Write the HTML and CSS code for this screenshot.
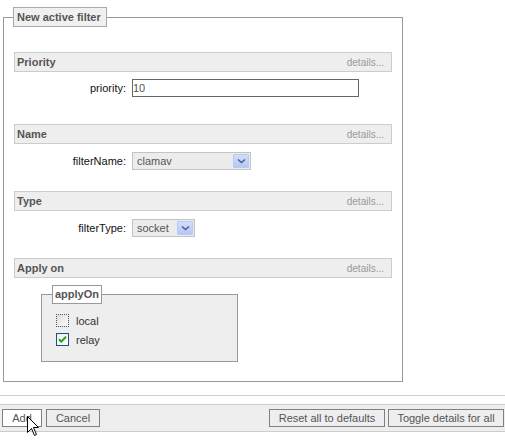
FILE: index.html
```html
<!DOCTYPE html>
<html>
<head>
<meta charset="utf-8">
<title>New active filter</title>
<link rel="stylesheet" href="styles.css">
</head>
<body>
<form class="page">
  <fieldset class="filter-box">
    <legend class="box-title">New active filter</legend>

    <section class="group group-priority">
      <div class="group-head"><span class="group-name">Priority</span><span class="group-details">details...</span></div>
      <div class="field-row row-first">
        <label class="field-label" for="priority">priority:</label>
        <input class="text-input" id="priority" type="text" value="10">
      </div>
    </section>

    <section class="group">
      <div class="group-head"><span class="group-name">Name</span><span class="group-details">details...</span></div>
      <div class="field-row">
        <span class="field-label">filterName:</span>
        <div class="select select-name">
          <span class="select-value">clamav</span>
          <span class="select-arrow"><svg width="9" height="6" viewBox="0 0 9 6"><path d="M1 1.5 L4.5 4.5 L8 1.5" fill="none" stroke="#4d6185" stroke-width="1.6"/></svg></span>
        </div>
      </div>
    </section>

    <section class="group">
      <div class="group-head"><span class="group-name">Type</span><span class="group-details">details...</span></div>
      <div class="field-row">
        <span class="field-label">filterType:</span>
        <div class="select select-type">
          <span class="select-value">socket</span>
          <span class="select-arrow"><svg width="9" height="6" viewBox="0 0 9 6"><path d="M1 1.5 L4.5 4.5 L8 1.5" fill="none" stroke="#4d6185" stroke-width="1.6"/></svg></span>
        </div>
      </div>
    </section>

    <section class="group group-apply">
      <div class="group-head"><span class="group-name">Apply on</span><span class="group-details">details...</span></div>
      <fieldset class="apply-box">
        <legend class="apply-title">applyOn</legend>
        <div class="check-row">
          <span class="check-box check-focus"></span>
          <span class="check-label">local</span>
        </div>
        <div class="check-row">
          <span class="check-box check-on"><svg width="11" height="11" viewBox="0 0 11 11"><path d="M2 5.2 L4.3 7.6 L9 2.8" fill="none" stroke="#21a121" stroke-width="2"/></svg></span>
          <span class="check-label">relay</span>
        </div>
      </fieldset>
    </section>
  </fieldset>

  <div class="divider"></div>

  <div class="action-bar">
    <button type="button" class="btn btn-add">Add</button>
    <button type="button" class="btn btn-cancel">Cancel</button>
    <span class="bar-spacer"></span>
    <button type="button" class="btn btn-reset">Reset all to defaults</button>
    <button type="button" class="btn btn-toggle">Toggle details for all</button>
  </div>

  <svg class="pointer" width="13" height="21" viewBox="0 0 13 21">
    <path d="M0.5 0.5 L0.5 16.5 L4.5 12.5 L7.5 19.5 L9.5 18.5 L6.5 11.5 L11.5 11.5 Z" fill="#fff" stroke="#000" stroke-width="1"/>
  </svg>
</form>
</body>
</html>
```

FILE: styles.css
```css
* {
  box-sizing: border-box;
}

html,
body {
  margin: 0;
  padding: 0;
  background: #fff;
}

body {
  font-family: "Liberation Sans", Arial, sans-serif;
  font-size: 11px;
  color: #222;
}

.page {
  position: relative;
  width: 505px;
  height: 444px;
  overflow: hidden;
}

/* outer frame */
.filter-box {
  width: 400px;
  min-width: 0;
  margin: 7px 0 0 3px;
  padding: 25px 10px 19px;
  border: 1px solid #999;
}

.box-title {
  height: 20px;
  line-height: 18px;
  margin-left: -1px;
  padding: 0 5px 0 3px;
  border: 1px solid #aaa;
  background: #f0f0f0;
  font-weight: bold;
  color: #555;
}

/* section headers */
.group + .group {
  margin-top: 21px;
}

.group-priority + .group {
  margin-top: 27px;
}

.group-head {
  display: flex;
  justify-content: space-between;
  align-items: center;
  height: 20px;
  padding: 0 7px 0 2px;
  border: 1px solid #ccc;
  background: #eee;
}

.group-name {
  font-weight: bold;
  color: #555;
}

.group-details {
  font-size: 10px;
  color: #999;
}

/* label + control rows */
.field-row {
  display: grid;
  grid-template-columns: 112px auto;
  column-gap: 6px;
  align-items: center;
  justify-content: start;
  margin-top: 8px;
}

.field-row.row-first {
  margin-top: 7px;
}

.field-label {
  text-align: right;
  color: #111;
}

.text-input {
  width: 227px;
  height: 18px;
  margin: 0;
  padding: 0;
  border: 1px solid #666;
  font: inherit;
  color: #555;
  background: #fff;
  outline: none;
}

.select {
  display: flex;
  height: 18px;
  padding: 1px;
  border: 1px solid #c3c3c3;
  background: #ececec;
}

.select-name {
  width: 119px;
}

.select-type {
  width: 63px;
}

.select-value {
  flex: 1;
  padding-left: 3px;
  line-height: 14px;
  color: #555;
}

.select-arrow {
  display: flex;
  align-items: center;
  justify-content: center;
  width: 16px;
  border: 1px solid #b7caf6;
  border-radius: 1px;
  background: linear-gradient(#d2ddfb, #b4c7f5);
}

/* applyOn group */
.apply-box {
  width: 197px;
  min-width: 0;
  margin: 7px 0 0 27px;
  padding: 10px 10px 15px;
  border: 1px solid #999;
  background: #eee;
}

.apply-title {
  height: 19px;
  line-height: 17px;
  padding: 0 2px;
  border: 1px solid #999;
  background: #fff;
  font-weight: bold;
  color: #555;
}

.check-row {
  display: flex;
  align-items: center;
  height: 13px;
  margin-left: 4px;
}

.check-row + .check-row {
  margin-top: 6px;
}

.check-box {
  display: flex;
  align-items: center;
  justify-content: center;
  width: 13px;
  height: 13px;
  background: linear-gradient(135deg, #dcdcd6, #fcfcfb);
}

.check-focus {
  border: 1px dotted #2f5a8c;
}

.check-on {
  border: 1px solid #1c5180;
  background: linear-gradient(135deg, #eeeeea, #ffffff);
}

.check-label {
  margin-left: 7px;
  color: #333;
}

/* bottom buttons */
.divider {
  margin-top: 13px;
  border-top: 1px solid #ccc;
}

.action-bar {
  display: flex;
  margin-top: 8px;
  padding: 4px 1px 4px 2px;
  border-top: 1px solid #ccc;
  border-bottom: 1px solid #ccc;
  background: #eee;
}

.bar-spacer {
  flex: 1;
}

.btn {
  height: 18px;
  margin: 0;
  padding: 0;
  border: 1px solid #808080;
  background: #eee;
  font: inherit;
  color: #555;
}

.btn-add {
  width: 40px;
  background: #fff;
}

.btn-cancel {
  width: 54px;
  margin-left: 4px;
}

.btn-reset {
  width: 116px;
}

.btn-toggle {
  width: 116px;
  margin-left: 3px;
}

/* mouse pointer resting over the Add button */
.pointer {
  position: absolute;
  left: 27px;
  top: 416px;
}
```
